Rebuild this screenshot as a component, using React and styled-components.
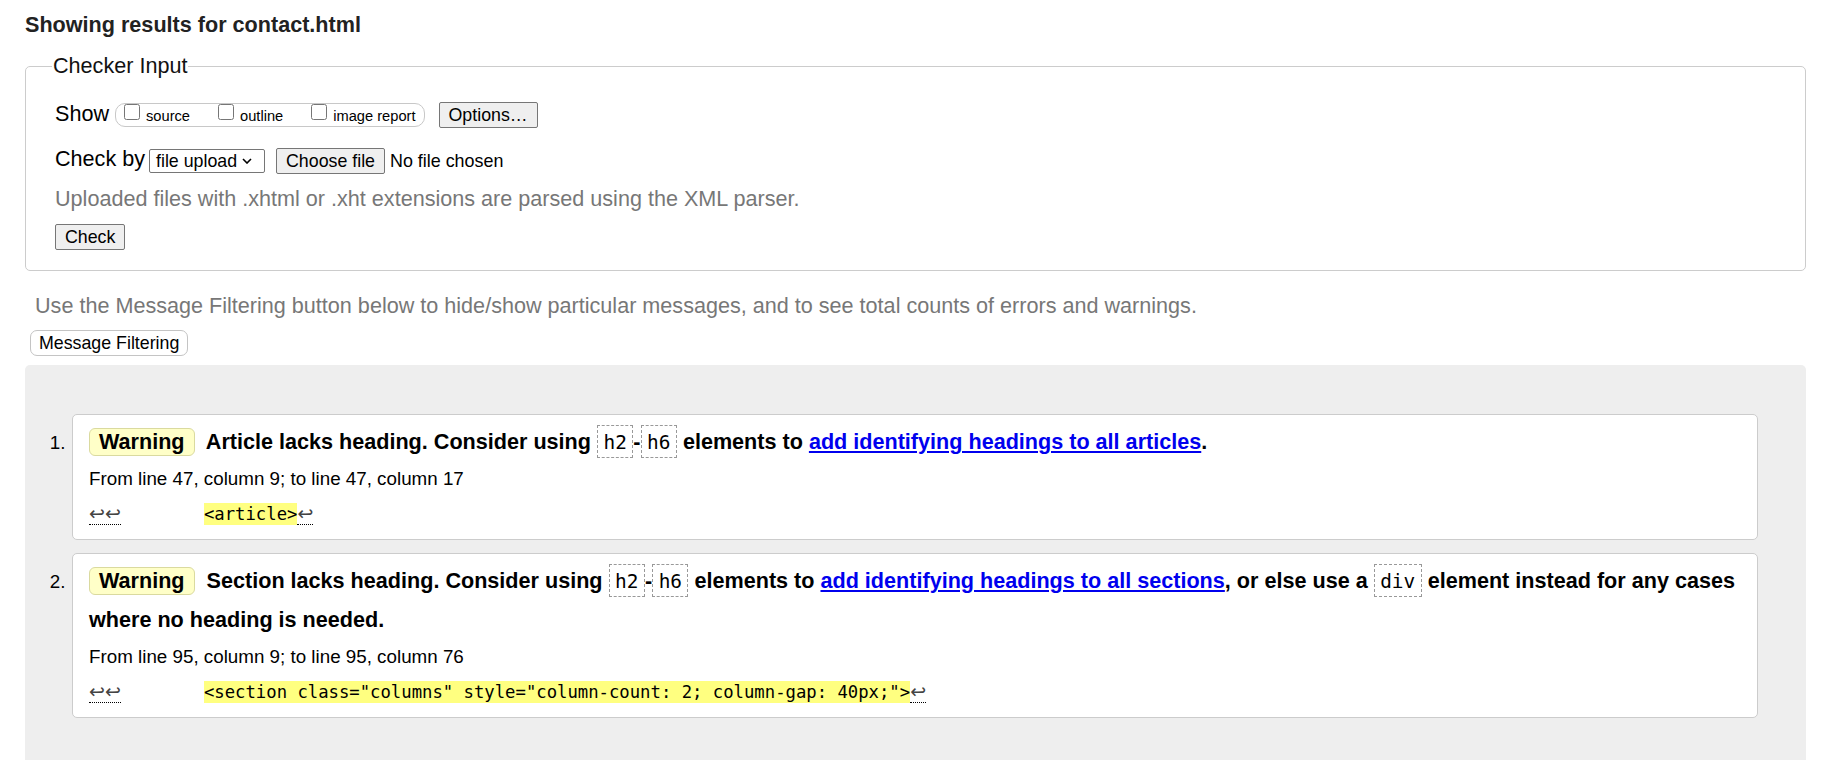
import React from "react";
import styled, { createGlobalStyle } from "styled-components";

const GlobalStyle = createGlobalStyle`
  html, body { margin: 0; padding: 0; background: #fff; }
  body {
    font-family: "Liberation Sans", Arial, sans-serif;
    color: #000;
  }
  * { box-sizing: border-box; }
`;

const Page = styled.main`
  padding: 0 15px 0 25px;
  font-size: 21.6px;
`;

const Heading = styled.h2`
  margin: 13px 0 0;
  font-size: 21.6px;
  line-height: 24px;
  font-weight: bold;
  color: #222;
`;

const Fieldset = styled.fieldset`
  margin: 17px 0 0;
  padding: 24px 0 20px 26px;
  border: 1px solid #ccc;
  border-radius: 5px;
  min-width: 0;
`;

const Legend = styled.legend`
  padding: 0 1px;
  font-size: 21.6px;
  line-height: 24px;
  color: #111;
`;

const Row = styled.div`
  display: flex;
  align-items: flex-start;
  height: 26px;
  padding-left: 3px;
  margin-top: ${(p) => p.$top || 0}px;
`;

const RowLabel = styled.span`
  font-size: 21.6px;
  line-height: 24px;
  margin-top: ${(p) => p.$shift || 0}px;
  white-space: nowrap;
`;

const ToggleGroup = styled.div`
  display: flex;
  align-items: flex-start;
  gap: 28px;
  height: 24px;
  margin: 1px 0 0 6px;
  padding: 0 8px;
  border: 1px solid #c8c8c8;
  border-radius: 10px;
`;

const Toggle = styled.label`
  display: flex;
  align-items: flex-start;
  gap: 6px;
  font-size: 14.67px;
  line-height: 17px;
  white-space: nowrap;
`;

const Box = styled.input`
  width: 16px;
  height: 16px;
  margin: 0;
`;

const ToggleText = styled.span`
  padding-top: 4px;
`;

const Button = styled.button`
  height: 26px;
  margin-left: ${(p) => p.$left || 0}px;
  margin-top: ${(p) => p.$top || 0}px;
  padding: 0 9px;
  font-family: "Liberation Sans", Arial, sans-serif;
  font-size: 17.8px;
  line-height: 24px;
  color: #000;
  background: #efefef;
  border: 1px solid #767676;
  border-radius: 2px;
  white-space: nowrap;
`;

const SelectBox = styled.div`
  display: flex;
  align-items: center;
  justify-content: space-between;
  width: 116px;
  height: 24px;
  margin: 1px 0 0 4px;
  padding: 0 12px 0 6px;
  font-size: 17.8px;
  border: 1px solid #767676;
  border-radius: 2px;
  background: #fff;
`;

const FileName = styled.span`
  margin-left: 5px;
  font-size: 17.9px;
  line-height: 26px;
  white-space: nowrap;
`;

const Hint = styled.p`
  margin: 13px 0 0;
  padding-left: 3px;
  font-size: 21.6px;
  line-height: 24px;
  color: #777;
`;

const CheckRow = styled.div`
  display: flex;
  padding-left: 3px;
  margin-top: 13px;
`;

const Intro = styled.p`
  margin: 23px 0 0;
  padding-left: 10px;
  font-size: 21.6px;
  line-height: 24px;
  color: #777;
`;

const FilterButton = styled.button`
  display: block;
  height: 26px;
  margin: 12px 0 0 5px;
  padding: 0 8px;
  font-family: "Liberation Sans", Arial, sans-serif;
  font-size: 17.8px;
  color: #000;
  background: #fff;
  border: 1px solid #c4c4c4;
  border-radius: 7px;
`;

const Panel = styled.ol`
  display: flex;
  flex-direction: column;
  gap: 13px;
  list-style: none;
  margin: 9px 0 0;
  padding: 49px 48px 60px 0;
  background: #eee;
  border-radius: 5px;
`;

const Item = styled.li`
  display: grid;
  grid-template-columns: 47px 1fr;
`;

const Num = styled.span`
  padding: 18px 6.5px 0 0;
  text-align: right;
  font-size: 18.8px;
  line-height: 21px;
`;

const Card = styled.div`
  background: #fff;
  border: 1px solid #ccc;
  border-radius: 5px;
  padding: 7px 8px 13px 16px;
`;

const Title = styled.p`
  margin: 0;
  font-size: 21.6px;
  font-weight: bold;
  line-height: 39px;
`;

const Badge = styled.span`
  display: inline-block;
  line-height: 24px;
  padding: 1px 9px;
  margin-right: 6px;
  border: 1px solid #dada9f;
  border-radius: 6px;
  background: #ffffc8;
`;

const Code = styled.code`
  display: inline-block;
  font-family: "DejaVu Sans Mono", monospace;
  font-weight: normal;
  font-size: 19.4px;
  line-height: 29px;
  padding: 2px 5.5px 0;
  border: 1px dashed #999;
`;

const Link = styled.a`
  color: #00e;
  text-decoration: underline;
`;

const Location = styled.p`
  margin: 6px 0 0;
  font-size: 18.8px;
  line-height: 24px;
`;

const Extract = styled.p`
  margin: 10px 0 0;
  font-family: "DejaVu Sans Mono", monospace;
  font-size: 17.25px;
  line-height: 24px;
  white-space: pre;
`;

const Ret = styled.span`
  font-family: "DejaVu Sans", sans-serif;
  font-size: 19px;
  color: #444;
  border-bottom: 1px dotted #000;
`;

const Hl = styled.mark`
  background: #ffff80;
  color: #000;
  padding: 1px 0;
`;

const Chevron = () => (
  <svg width="10" height="6" viewBox="0 0 10 6" aria-hidden="true">
    <polyline points="1,1 5,5 9,1" fill="none" stroke="#000" strokeWidth="1.6" />
  </svg>
);

const messages = [
  {
    title: (
      <>
        Article lacks heading. Consider using <Code>h2</Code>-<Code>h6</Code> elements to{" "}
        <Link href="#">add identifying headings to all articles</Link>.
      </>
    ),
    location: "From line 47, column 9; to line 47, column 17",
    code: "<article>",
  },
  {
    title: (
      <>
        Section lacks heading. Consider using <Code>h2</Code>-<Code>h6</Code> elements to{" "}
        <Link href="#">add identifying headings to all sections</Link>, or else use a{" "}
        <Code>div</Code> element instead for any cases where no heading is needed.
      </>
    ),
    location: "From line 95, column 9; to line 95, column 76",
    code: '<section class="columns" style="column-count: 2; column-gap: 40px;">',
  },
];

export default function App() {
  return (
    <>
      <GlobalStyle />
      <Page>
        <Heading>Showing results for contact.html</Heading>
        <Fieldset>
          <Legend>Checker Input</Legend>
          <Row>
            <RowLabel>Show</RowLabel>
            <ToggleGroup>
              <Toggle>
                <Box type="checkbox" />
                <ToggleText>source</ToggleText>
              </Toggle>
              <Toggle>
                <Box type="checkbox" />
                <ToggleText>outline</ToggleText>
              </Toggle>
              <Toggle>
                <Box type="checkbox" />
                <ToggleText>image report</ToggleText>
              </Toggle>
            </ToggleGroup>
            <Button $left={14}>Options…</Button>
          </Row>
          <Row $top={20}>
            <RowLabel $shift={-1}>Check by</RowLabel>
            <SelectBox>
              <span>file upload</span>
              <Chevron />
            </SelectBox>
            <Button $left={11}>Choose file</Button>
            <FileName>No file chosen</FileName>
          </Row>
          <Hint>Uploaded files with .xhtml or .xht extensions are parsed using the XML parser.</Hint>
          <CheckRow>
            <Button>Check</Button>
          </CheckRow>
        </Fieldset>
        <Intro>
          Use the Message Filtering button below to hide/show particular messages, and to see total
          counts of errors and warnings.
        </Intro>
        <FilterButton>Message Filtering</FilterButton>
        <Panel>
          {messages.map((m, i) => (
            <Item key={i}>
              <Num>{i + 1}.</Num>
              <Card>
                <Title>
                  <Badge>Warning</Badge> {m.title}
                </Title>
                <Location>{m.location}</Location>
                <Extract>
                  <Ret>↩↩</Ret>
                  {"        "}
                  <Hl>{m.code}</Hl>
                  <Ret>↩</Ret>
                </Extract>
              </Card>
            </Item>
          ))}
        </Panel>
      </Page>
    </>
  );
}
